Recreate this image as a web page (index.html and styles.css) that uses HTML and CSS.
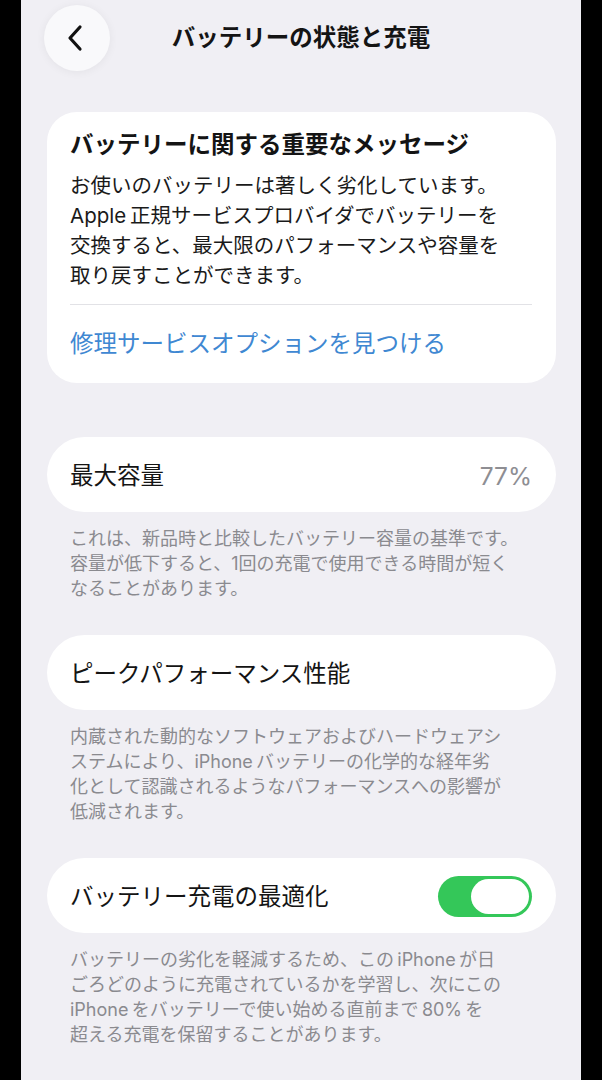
FILE: index.html
```html
<!DOCTYPE html>
<html lang="ja">
<head>
<meta charset="utf-8">
<title>バッテリーの状態と充電</title>
<link rel="stylesheet" href="styles.css">
</head>
<body>
<div class="screen">
  <header class="nav">
    <button class="back" aria-label="戻る">
      <svg width="18" height="28" viewBox="0 0 18 28"><path d="M14 3 L4 14 L14 25" fill="none" stroke="#111" stroke-width="3.2" stroke-linecap="round" stroke-linejoin="round"/></svg>
    </button>
    <h1 class="nav-title">バッテリーの状態と充電</h1>
    <span class="nav-spacer"></span>
  </header>

  <main class="content">
    <section class="card message">
      <h2 class="message-title">バッテリーに関する重要なメッセージ</h2>
      <p class="message-body">お使いのバッテリーは著しく劣化しています。<br>Apple&#8201;正規サービスプロバイダでバッテリーを<br>交換すると、最大限のパフォーマンスや容量を<br>取り戻すことができます。</p>
      <div class="divider"></div>
      <div class="link-row"><span class="link">修理サービスオプションを見つける</span></div>
    </section>

    <section class="card row">
      <span class="label">最大容量</span>
      <span class="value">77%</span>
    </section>
    <p class="footnote">これは、新品時と比較したバッテリー容量の基準です。<br>容量が低下すると、1回の充電で使用できる時間が短く<br>なることがあります。</p>

    <section class="card row">
      <span class="label">ピークパフォーマンス性能</span>
    </section>
    <p class="footnote">内蔵された動的なソフトウェアおよびハードウェアシ<br>ステムにより、iPhone&#8201;バッテリーの化学的な経年劣<br>化として認識されるようなパフォーマンスへの影響が<br>低減されます。</p>

    <section class="card row">
      <span class="label">バッテリー充電の最適化</span>
      <span class="toggle"><span class="knob"></span></span>
    </section>
    <p class="footnote">バッテリーの劣化を軽減するため、この&#8201;iPhone&#8201;が日<br>ごろどのように充電されているかを学習し、次にこの<br>iPhone&#8201;をバッテリーで使い始める直前まで&#8201;80%&#8201;を<br>超える充電を保留することがあります。</p>
  </main>
</div>
</body>
</html>
```

FILE: styles.css
```css
html, body {
  margin: 0;
  padding: 0;
  background: #000;
}

body {
  font-family: "Inter", "Noto Sans CJK JP", sans-serif;
  color: #111;
}

.screen {
  width: 560px;
  height: 1080px;
  margin-left: 21px;
  background: #f0eff4;
  overflow: hidden;
}

.nav {
  display: grid;
  grid-template-columns: 66px 1fr 66px;
  align-items: center;
  padding: 5px 23px 0 23px;
  height: 66px;
}

.back {
  width: 66px;
  height: 66px;
  border-radius: 50%;
  border: none;
  background: #f9f9fb;
  box-shadow: 0 1px 10px rgba(0, 0, 0, 0.06);
  display: flex;
  align-items: center;
  justify-content: center;
  padding: 0;
}

.back svg {
  margin-left: -4px;
}

.nav-title {
  margin: 0;
  text-align: center;
  font-size: 23.5px;
  line-height: 32px;
  font-weight: 600;
  color: #141414;
}

.content {
  padding: 41px 25px 0 26px;
}

.card {
  background: #fff;
  border-radius: 30px;
}

.message {
  padding: 17px 24px 0 23px;
}

.message-title {
  margin: 0;
  font-size: 23.5px;
  line-height: 32px;
  font-weight: 600;
  color: #141414;
  white-space: nowrap;
}

.message-body {
  margin: 10px 0 0 0;
  font-size: 20.5px;
  line-height: 30px;
  color: #1a1a1a;
  white-space: nowrap;
}

.divider {
  margin-top: 13px;
  height: 1px;
  background: #e2e2e6;
}

.link-row {
  height: 78px;
  display: flex;
  align-items: center;
}

.link {
  font-size: 23.5px;
  line-height: 32px;
  color: #3f88d2;
}

.row {
  margin-top: 54px;
  height: 75px;
  border-radius: 38px;
  display: flex;
  align-items: center;
  justify-content: space-between;
  padding: 2px 24px 0 23px;
  box-sizing: border-box;
}

.footnote + .row {
  margin-top: 34px;
}

.label {
  font-size: 23.5px;
  line-height: 32px;
  color: #141414;
}

.value {
  font-size: 24.5px;
  line-height: 32px;
  color: #8e8e93;
}

.footnote {
  margin: 14px 0 0 0;
  padding-left: 23px;
  font-size: 18px;
  line-height: 25px;
  color: #8a8a8f;
  white-space: nowrap;
}

.toggle {
  width: 94px;
  height: 41px;
  border-radius: 21px;
  background: #34c759;
  display: flex;
  align-items: center;
  justify-content: flex-end;
  padding: 0 3px;
  box-sizing: border-box;
}

.knob {
  width: 58px;
  height: 35px;
  border-radius: 18px;
  background: #fff;
}
```
